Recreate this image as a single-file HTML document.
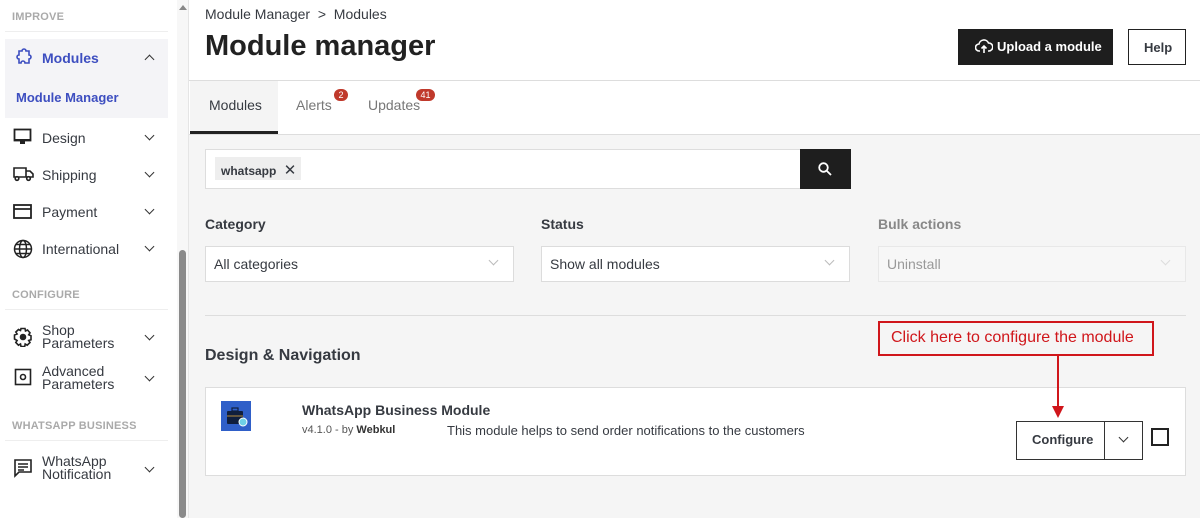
<!DOCTYPE html>
<html><head><meta charset="utf-8"><style>
*{box-sizing:border-box;margin:0;padding:0}
body{width:1200px;height:518px;overflow:hidden;background:#fff;font-family:"Liberation Sans",sans-serif;color:#363a41;position:relative;font-size:14px}
.a{position:absolute}
.sec{font-size:11px;font-weight:bold;color:#aaa;letter-spacing:.2px}
.hl{height:1px;background:#eee}
.it{font-size:14px;color:#363a41;}
.chev{width:7px;height:7px;border-right:1.6px solid #333;border-bottom:1.6px solid #333;transform:rotate(45deg)}
.sel{background:#fff;border:1px solid #dcdcdc;height:36px;padding:9px 8px;font-size:14px}
.lbl{font-weight:bold;font-size:14px}
</style></head><body>
<div class="a sec" style="left:12px;top:11px">IMPROVE</div>
<div class="a hl" style="left:5px;top:31px;width:163px"></div>
<div class="a" style="left:5px;top:39px;width:163px;height:79px;background:#f4f4f7"></div>
<svg class="a" style="left:14px;top:47px" width="20" height="20" viewBox="0 0 20 20" fill="none" stroke="#3d4ec0" stroke-width="1.6"><path d="M5 2h3a2 2 0 014 0h3v4a2 2 0 010 4v4h-4a2 2 0 00-4 0H5v-4a2 2 0 010-4z" transform="translate(0,2)"/></svg>
<div class="a" style="left:42px;top:50px;font-weight:bold;color:#3d4ec0">Modules</div>
<div class="a chev" style="left:146px;top:56px;transform:rotate(225deg)"></div>
<div class="a" style="left:16px;top:90px;font-weight:bold;color:#3d4ec0;font-size:13px">Module Manager</div>
<svg class="a" style="left:13px;top:128px" width="20" height="18" viewBox="0 0 20 18"><rect x="1.5" y="1.5" width="16" height="11" fill="none" stroke="#222" stroke-width="1.8"/><rect x="1" y="11" width="17" height="2" fill="#222"/><rect x="7" y="13" width="5" height="3" fill="#222"/></svg>
<div class="a it" style="left:42px;top:130px">Design</div><div class="a chev" style="left:146px;top:132px"></div>
<svg class="a" style="left:13px;top:166px" width="21" height="16" viewBox="0 0 21 16" fill="none" stroke="#222" stroke-width="1.6"><path d="M1 2h12v9H1zM13 5h4l3 3v3h-7"/><circle cx="4" cy="12.5" r="1.8" fill="#fff"/><circle cx="15.5" cy="12.5" r="1.8" fill="#fff"/></svg>
<div class="a it" style="left:42px;top:167px">Shipping</div><div class="a chev" style="left:146px;top:169px"></div>
<svg class="a" style="left:13px;top:204px" width="20" height="16" viewBox="0 0 20 16" fill="none" stroke="#222" stroke-width="1.8"><rect x="1" y="1" width="17" height="13"/><path d="M1 5h17"/></svg>
<div class="a it" style="left:42px;top:204px">Payment</div><div class="a chev" style="left:146px;top:206px"></div>
<svg class="a" style="left:13px;top:239px" width="20" height="20" viewBox="0 0 20 20" fill="none" stroke="#222" stroke-width="1.5"><circle cx="10" cy="10" r="8.5"/><ellipse cx="10" cy="10" rx="3.5" ry="8.5"/><path d="M1.5 10h17M3 5.5h14M3 14.5h14"/></svg>
<div class="a it" style="left:42px;top:241px">International</div><div class="a chev" style="left:146px;top:243px"></div>
<div class="a sec" style="left:12px;top:289px">CONFIGURE</div>
<div class="a hl" style="left:5px;top:309px;width:163px"></div>
<svg class="a" style="left:13px;top:327px" width="20" height="20" viewBox="0 0 20 20" fill="none" stroke="#222" stroke-width="1.6"><path d="M8 1.5h4l.5 2.5 2-1 2.5 2.8-1.3 2 2.3 1v4l-2.3.7 1.3 2-2.8 2.7-2-1.2-.5 2.5H8l-.5-2.5-2 1.2L2.8 15.5l1.3-2L1.5 12V8l2.6-1-1.3-2L5.5 2.5l2 1z"/><circle cx="10" cy="10" r="2.5" fill="#222"/></svg>
<div class="a it" style="left:42px;top:324px;line-height:13px">Shop<br>Parameters</div><div class="a chev" style="left:146px;top:332px"></div>
<svg class="a" style="left:14px;top:368px" width="18" height="18" viewBox="0 0 18 18" fill="none" stroke="#222" stroke-width="1.6"><rect x="1.5" y="1.5" width="15" height="15"/><circle cx="9" cy="9" r="2.5"/></svg>
<div class="a it" style="left:42px;top:365px;line-height:13px">Advanced<br>Parameters</div><div class="a chev" style="left:146px;top:373px"></div>
<div class="a sec" style="left:12px;top:420px">WHATSAPP BUSINESS</div>
<div class="a hl" style="left:5px;top:440px;width:163px"></div>
<svg class="a" style="left:13px;top:458px" width="20" height="20" viewBox="0 0 20 20" fill="none" stroke="#222" stroke-width="1.6"><path d="M2 2h16v12H6l-4 4z"/><path d="M5 6h10M5 9h10M5 12h6"/></svg>
<div class="a it" style="left:42px;top:455px;line-height:13px">WhatsApp<br>Notification</div><div class="a chev" style="left:146px;top:464px"></div>
<div class="a" style="left:177px;top:0;width:11px;height:518px;background:#f7f7f7"></div>
<div class="a" style="left:179px;top:5px;width:0;height:0;border-left:4px solid transparent;border-right:4px solid transparent;border-bottom:5px solid #888"></div>
<div class="a" style="left:179px;top:250px;width:7px;height:268px;background:#8a8a8a;border-radius:4px"></div>
<div class="a" style="left:188px;top:0;width:1px;height:518px;background:#e5e5e5"></div>
<div class="a" style="left:205px;top:6px;font-size:14px">Module Manager &nbsp;&gt;&nbsp; Modules</div>
<div class="a" style="left:205px;top:30px;font-size:29px;font-weight:bold;color:#222">Module manager</div>
<div class="a" style="left:958px;top:29px;width:155px;height:36px;background:#1e1e1e;color:#fff;font-weight:bold;font-size:13px;padding:10px 0 0 39px">Upload a module</div>
<svg class="a" style="left:975px;top:38px" width="18" height="16" viewBox="0 0 18 16" fill="none" stroke="#fff" stroke-width="1.6"><path d="M5 13H4a3.5 3.5 0 010-7 5 5 0 019.5-1A3.5 3.5 0 0114 13h-1M9 15V8M6.5 10.5L9 8l2.5 2.5"/></svg>
<div class="a" style="left:1128px;top:29px;width:58px;height:36px;border:1px solid #222;font-weight:bold;font-size:13px;padding:10px 0 0 15px">Help</div>
<div class="a" style="left:189px;top:80px;width:1011px;height:1px;background:#ddd"></div>
<div class="a" style="left:189px;top:134px;width:1011px;height:384px;background:#f5f5f5;border-top:1px solid #ddd"></div>
<div class="a" style="left:190px;top:81px;width:88px;height:53px;background:#f4f4f4;border-bottom:3px solid #222"></div>
<div class="a" style="left:209px;top:97px">Modules</div>
<div class="a" style="left:296px;top:97px;color:#777">Alerts</div>
<div class="a" style="left:334px;top:89px;width:14px;height:12px;border-radius:7px;background:#c0392b;color:#fff;font-size:9px;text-align:center;line-height:12px">2</div>
<div class="a" style="left:368px;top:97px;color:#777">Updates</div>
<div class="a" style="left:416px;top:89px;width:19px;height:12px;border-radius:7px;background:#c0392b;color:#fff;font-size:9px;text-align:center;line-height:12px">41</div>
<div class="a" style="left:205px;top:149px;width:596px;height:40px;background:#fff;border:1px solid #ddd"></div>
<div class="a" style="left:215px;top:157px;width:86px;height:23px;background:#eee;font-size:12px;font-weight:bold;padding:4px 0 0 6px">whatsapp <span style="font-weight:normal;font-size:15px;margin-left:4px">✕</span></div>
<div class="a" style="left:800px;top:149px;width:51px;height:40px;background:#1e1e1e"></div>
<svg class="a" style="left:818px;top:162px" width="14" height="14" viewBox="0 0 14 14" fill="none" stroke="#fff" stroke-width="1.8"><circle cx="5.5" cy="5.5" r="4.3"/><path d="M8.7 8.7L13 13"/></svg>
<div class="a lbl" style="left:205px;top:216px">Category</div>
<div class="a lbl" style="left:541px;top:216px">Status</div>
<div class="a lbl" style="left:878px;top:216px;color:#888">Bulk actions</div>
<div class="a sel" style="left:205px;top:246px;width:309px">All categories</div>
<div class="a sel" style="left:541px;top:246px;width:309px">Show all modules</div>
<div class="a sel" style="left:878px;top:246px;width:308px;background:#f7f7f7;color:#999;border-color:#e8e8e8">Uninstall</div>
<div class="a chev" style="left:490px;top:257px;border-color:#bbb;border-width:0 1px 1px 0"></div>
<div class="a chev" style="left:826px;top:257px;border-color:#bbb;border-width:0 1px 1px 0"></div>
<div class="a chev" style="left:1162px;top:257px;border-color:#ddd;border-width:0 1px 1px 0"></div>
<div class="a" style="left:205px;top:315px;width:981px;height:1px;background:#ddd"></div>
<div class="a" style="left:205px;top:347px;font-size:16px;font-weight:bold">Design &amp; Navigation</div>
<div class="a" style="left:205px;top:387px;width:981px;height:89px;background:#fff;border:1px solid #ddd"></div>
<svg class="a" style="left:221px;top:401px" width="30" height="30" viewBox="0 0 30 30"><rect width="30" height="30" fill="#2f5fc8"/><rect x="6" y="10" width="16" height="13" rx="1" fill="#0f1e3d"/><rect x="11" y="7" width="6" height="3" fill="none" stroke="#0f1e3d" stroke-width="1.2"/><path d="M6 15h16" stroke="#b58b3a"/><circle cx="22" cy="21" r="4" fill="#6fd0e6" stroke="#fff"/></svg>
<div class="a" style="left:302px;top:402px;font-weight:bold;font-size:14px">WhatsApp Business Module</div>
<div class="a" style="left:302px;top:424px;font-size:11px;color:#555">v4.1.0 - by <b style="color:#333">Webkul</b></div>
<div class="a" style="left:447px;top:423px;font-size:13px">This module helps to send order notifications to the customers</div>
<div class="a" style="left:1016px;top:421px;width:127px;height:39px;border:1px solid #333;background:#fff"></div>
<div class="a" style="left:1104px;top:421px;width:1px;height:39px;background:#333"></div>
<div class="a" style="left:1032px;top:432px;font-size:13px;font-weight:bold">Configure</div>
<div class="a chev" style="left:1120px;top:434px"></div>
<div class="a" style="left:1151px;top:428px;width:18px;height:18px;border:2px solid #222"></div>
<div class="a" style="left:878px;top:321px;width:276px;height:35px;border:2px solid #d0161b;background:#f5f5f5;color:#d0161b;font-size:16px;padding:6px 0 0 11px">Click here to configure the module</div>
<div class="a" style="left:1057px;top:356px;width:2px;height:54px;background:#d0161b"></div>
<div class="a" style="left:1052px;top:406px;width:0;height:0;border-left:6px solid transparent;border-right:6px solid transparent;border-top:12px solid #d0161b"></div>
</body></html>
